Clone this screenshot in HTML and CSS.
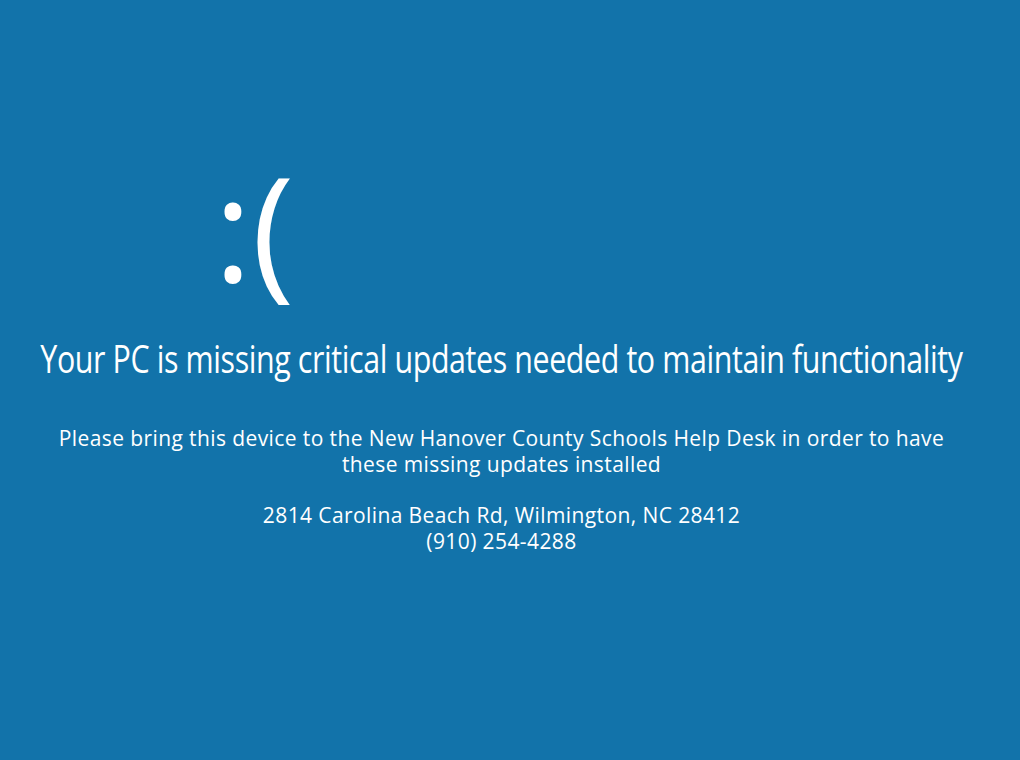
FILE: index.html
```html
<!DOCTYPE html>
<html lang="en">
<head>
<meta charset="utf-8">
<title>Missing updates</title>
<link rel="stylesheet" href="styles.css">
</head>
<body>
<main class="screen">
  <div class="face-row"><span class="face">:(</span></div>
  <h1 class="title"><span class="title-inner">Your PC is missing critical updates needed to maintain functionality</span></h1>
  <p class="msg">Please bring this device to the New Hanover County Schools Help Desk in order to have<br>these missing updates installed</p>
  <p class="contact">2814 Carolina Beach Rd, Wilmington, NC 28412<br>(910) 254-4288</p>
</main>
</body>
</html>
```
FILE: styles.css
```css
html, body {
  margin: 0;
  padding: 0;
  background: #1273aa;
  height: 100%;
  overflow: hidden;
}
.screen {
  width: 1003px;
  height: 760px;
  color: #ffffff;
  font-family: "Open Sans", "Noto Sans", sans-serif;
  display: flex;
  flex-direction: column;
  align-items: center;
  box-sizing: border-box;
  padding-top: 154px;
}
.face-row {
  align-self: stretch;
  padding-left: 214px;
  height: 144px;
}
.face {
  font-family: "Open Sans", sans-serif;
  font-weight: 400;
  font-size: 144px;
  line-height: 144px;
  display: inline-block;
}
.title {
  margin: 35px 0 0;
  width: 922px;
  font-weight: 400;
  font-family: "Open Sans", sans-serif;
  font-size: 38px;
  line-height: 50px;
  white-space: nowrap;
  text-align: center;
  display: flex;
  justify-content: center;
}
.title-inner {
  display: inline-block;
  letter-spacing: -0.5px;
  transform: scaleX(0.8);
  flex: none;
}
.msg, .contact {
  margin: 0;
  text-align: center;
  font-size: 21px;
  letter-spacing: 0.4px;
  line-height: 26px;
}
.msg { margin-top: 42px; }
.contact { margin-top: 25px; }
```
